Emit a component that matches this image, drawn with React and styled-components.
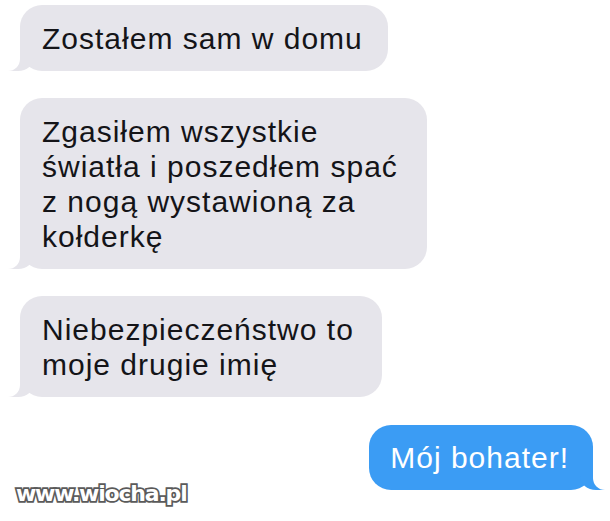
import React from "react";
import styled, { createGlobalStyle, css } from "styled-components";

const GlobalStyle = createGlobalStyle`
  html, body {
    margin: 0;
    background: #ffffff;
  }
`;

const GREY = "#e6e5eb";
const BLUE = "#3b9cf4";

const Page = styled.div`
  position: relative;
  width: 610px;
  height: 521px;
  box-sizing: border-box;
  padding: 5px 17px 0 20px;
  display: flex;
  flex-direction: column;
  align-items: flex-start;
  gap: 27px;
  overflow: hidden;
  font-family: "Liberation Sans", Arial, sans-serif;
`;

const Bubble = styled.div`
  position: relative;
  box-sizing: border-box;
  max-width: ${(p) => p.$max || 420}px;
  padding: 16px 25px 15px 22px;
  border-radius: 22px;
  font-size: 30px;
  line-height: 35px;
  letter-spacing: 1px;
  background: ${(p) => (p.$mine ? BLUE : GREY)};
  color: ${(p) => (p.$mine ? "#ffffff" : "#141418")};
  z-index: 0;

  &::before,
  &::after {
    content: "";
    position: absolute;
    bottom: 0;
    height: 25px;
  }

  ${(p) =>
    p.$mine
      ? css`
          align-self: flex-end;
          margin-top: 1px;
          padding: 15px 24px 15px 21px;
          &::before {
            right: -13px;
            width: 26px;
            background: ${BLUE};
            border-bottom-left-radius: 16px 14px;
            z-index: -1;
          }
          &::after {
            right: -30px;
            width: 30px;
            background: #ffffff;
            border-bottom-left-radius: 12px;
            z-index: -1;
          }
        `
      : css`
          &::before {
            left: -12px;
            width: 26px;
            background: ${GREY};
            border-bottom-right-radius: 16px 14px;
            z-index: -1;
          }
          &::after {
            left: -30px;
            width: 30px;
            background: #ffffff;
            border-bottom-right-radius: 12px;
            z-index: -1;
          }
        `}
`;

const Watermark = styled.div`
  position: absolute;
  left: 16px;
  top: 481px;
  font-family: "DejaVu Sans", "Liberation Sans", sans-serif;
  font-weight: 700;
  font-size: 22px;
  letter-spacing: -1.2px;
  color: #ffffff;
  -webkit-text-stroke: 3.5px #5a5a5a;
  paint-order: stroke fill;
`;

const messages = [
  { text: "Zostałem sam w domu" },
  { text: "Zgasiłem wszystkie światła i poszedłem spać z nogą wystawioną za kołderkę", max: 407 },
  { text: "Niebezpieczeństwo to moje drugie imię", max: 362 },
  { text: "Mój bohater!", mine: true },
];

export default function App() {
  return (
    <>
      <GlobalStyle />
      <Page>
        {messages.map((m, i) => (
          <Bubble key={i} $mine={m.mine} $max={m.max}>
            {m.text}
          </Bubble>
        ))}
        <Watermark>www.wiocha.pl</Watermark>
      </Page>
    </>
  );
}
